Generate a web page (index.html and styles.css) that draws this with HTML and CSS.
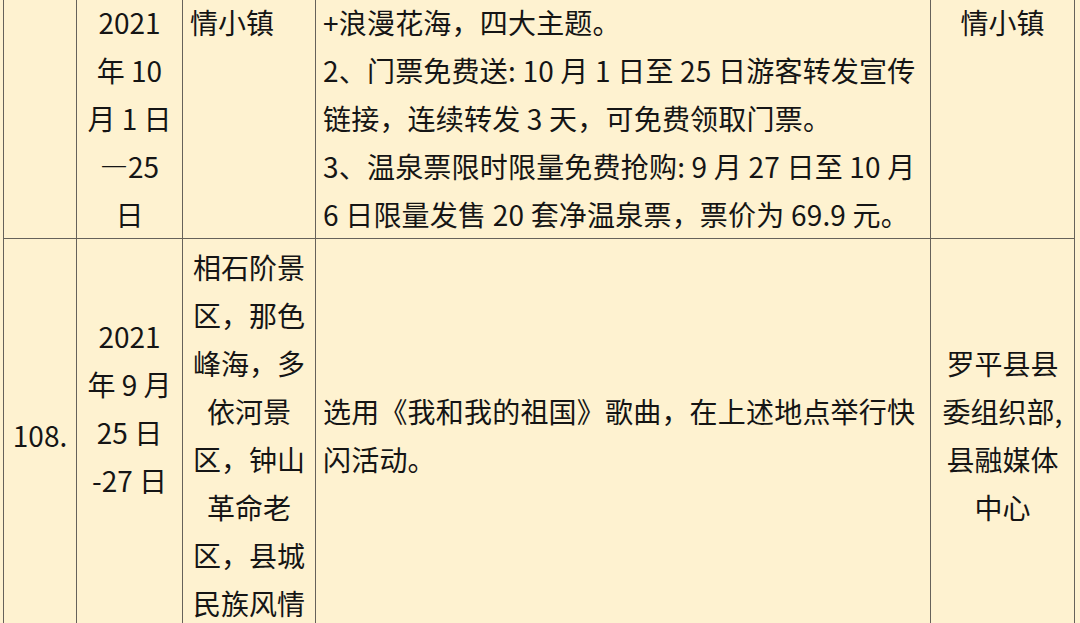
FILE: index.html
```html
<!DOCTYPE html>
<html lang="zh-CN">
<head>
<meta charset="utf-8">
<title>活动表</title>
<link rel="stylesheet" href="styles.css">
</head>
<body>
<table class="events">
  <colgroup>
    <col class="c-no">
    <col class="c-date">
    <col class="c-place">
    <col class="c-desc">
    <col class="c-org">
  </colgroup>
  <tbody>
    <tr class="row-first">
      <td class="no"></td>
      <td class="date">2021<br>年 10<br>月 1 日<br>—25<br>日</td>
      <td class="place left">情小镇</td>
      <td class="desc">+浪漫花海，四大主题。<br>2、门票免费送: 10 月 1 日至 25 日游客转发宣传<br>链接，连续转发 3 天，可免费领取门票。<br>3、温泉票限时限量免费抢购: 9 月 27 日至 10 月<br>6 日限量发售 20 套净温泉票，票价为 69.9 元。</td>
      <td class="org">情小镇</td>
    </tr>
    <tr class="row-mid">
      <td class="no">108.</td>
      <td class="date date-mid">2021<br>年 9 月<br>25 日<br>-27 日<br>&nbsp;</td>
      <td class="place">相石阶景<br>区，那色<br>峰海，多<br>依河景<br>区，钟山<br>革命老<br>区，县城<br>民族风情</td>
      <td class="desc">选用《我和我的祖国》歌曲，在上述地点举行快<br>闪活动。</td>
      <td class="org">罗平县县<br>委组织部,<br>县融媒体<br>中心</td>
    </tr>
  </tbody>
</table>
</body>
</html>
```

FILE: styles.css
```css
html, body {
  margin: 0;
  padding: 0;
  background: #fef2d0;
}

body {
  font-family: "Noto Sans CJK SC", "Noto Sans", sans-serif;
  font-size: 28px;
  line-height: 48px;
  color: #151515;
  overflow: hidden;
}

.events {
  table-layout: fixed;
  border-collapse: collapse;
  width: 1072px;
  margin: -7px 0 0 3px;
}

.c-no { width: 73px; }
.c-date { width: 106px; }
.c-place { width: 133px; }
.c-desc { width: 615px; }
.c-org { width: 144px; }

.events td {
  border: 1px solid #66625a;
  padding: 4px 7px 0;
  white-space: nowrap;
  overflow: visible;
  text-align: center;
}

.row-first td {
  vertical-align: top;
}

.row-mid td {
  vertical-align: middle;
}

.events td.desc,
.events td.left {
  text-align: left;
}

.events td.desc {
  letter-spacing: 0.2px;
}

.row-mid td.place {
  vertical-align: top;
}

.events td.date-mid {
  padding-bottom: 6px;
}
```
